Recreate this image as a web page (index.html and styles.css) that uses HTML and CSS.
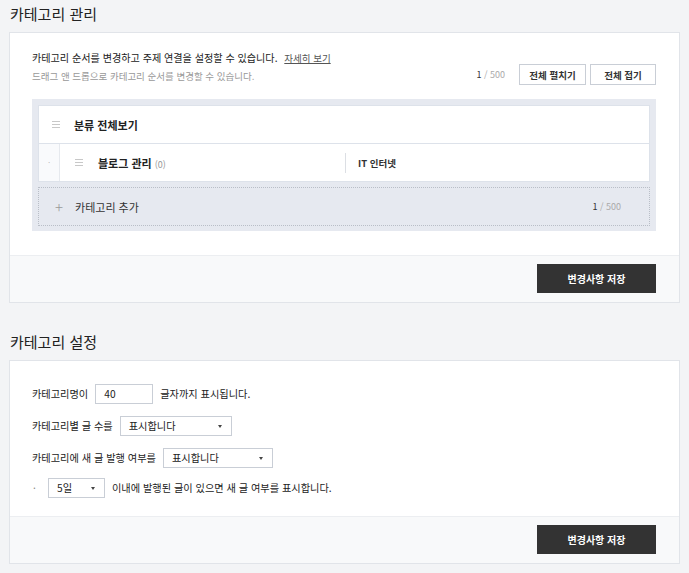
FILE: index.html
```html
<!DOCTYPE html>
<html lang="ko">
<head>
    <meta charset="UTF-8">
    <meta name="viewport" content="width=device-width, initial-scale=1.0">
    <title>카테고리 관리</title>
    <link rel="stylesheet" href="styles.css">
</head>
<body>

    <h2 class="section-title">카테고리 관리</h2>
    <div class="card">
        <div class="card-body">
            <div class="intro">
                <div class="intro-text">
                    <p class="desc">카테고리 순서를 변경하고 주제 연결을 설정할 수 있습니다. <a href="#" class="help-link">자세히 보기</a></p>
                    <p class="sub-desc">드래그 앤 드롭으로 카테고리 순서를 변경할 수 있습니다.</p>
                </div>
                <div class="intro-actions">
                    <span class="count"><b>1</b> / 500</span>
                    <button class="btn-line">전체 펼치기</button>
                    <button class="btn-line">전체 접기</button>
                </div>
            </div>

            <div class="tree">
                <div class="tree-row root">
                    <span class="drag"><i></i><i></i><i></i></span>
                    <span class="name">분류 전체보기</span>
                </div>
                <div class="tree-row child">
                    <span class="indent">·</span>
                    <div class="child-main">
                        <span class="drag"><i></i><i></i><i></i></span>
                        <span class="name">블로그 관리 <em>(0)</em></span>
                        <span class="topic">IT 인터넷</span>
                    </div>
                </div>
                <div class="tree-add">
                    <span class="plus">+</span>
                    <span class="name">카테고리 추가</span>
                    <span class="count"><b>1</b> / 500</span>
                </div>
            </div>
        </div>
        <div class="card-footer">
            <button class="btn-save">변경사항 저장</button>
        </div>
    </div>

    <h2 class="section-title">카테고리 설정</h2>
    <div class="card">
        <div class="card-body settings">
            <div class="set-row">
                <span>카테고리명이</span>
                <span class="field w-name">40</span>
                <span>글자까지 표시됩니다.</span>
            </div>
            <div class="set-row">
                <span>카테고리별 글 수를</span>
                <span class="field select w-show">표시합니다<i class="caret"></i></span>
            </div>
            <div class="set-row">
                <span>카테고리에 새 글 발행 여부를</span>
                <span class="field select w-new">표시합니다<i class="caret"></i></span>
            </div>
            <div class="set-row">
                <span class="bullet">·</span>
                <span class="field select w-day">5일<i class="caret"></i></span>
                <span>이내에 발행된 글이 있으면 새 글 여부를 표시합니다.</span>
            </div>
        </div>
        <div class="card-footer">
            <button class="btn-save">변경사항 저장</button>
        </div>
    </div>

</body>
</html>
```

FILE: styles.css
```css
body {
    margin: 0;
    padding: 0 9px 20px;
    background-color: #f3f4f6;
    font-family: "Noto Sans CJK KR", "Noto Sans", sans-serif;
    color: #333;
    font-size: 10px;
}

.section-title {
    margin: 0;
    height: 32px;
    line-height: 28px;
    padding-left: 1px;
    font-size: 15px;
    font-weight: 400;
    color: #222;
}

.card + .section-title {
    margin-top: 25px;
}

.card {
    background-color: #fff;
    border: 1px solid #e1e4e9;
}

.card-body {
    padding: 16px 23px 24px 22px;
}

/* intro */
.intro {
    display: flex;
    justify-content: space-between;
    align-items: flex-end;
}

.intro p {
    margin: 0;
    line-height: 18px;
}

.desc {
    color: #222;
    font-size: 10.1px;
}

.help-link {
    color: #555;
    margin-left: 4px;
    font-size: 9.5px;
}

.sub-desc {
    color: #999;
    font-size: 9.5px;
}

.intro-actions {
    display: flex;
    align-items: center;
    gap: 4px;
}

.count {
    color: #aaa;
    font-size: 9px;
    margin-right: 10px;
}

.count b {
    color: #333;
    font-weight: 400;
}

.btn-line {
    height: 21px;
    padding: 0;
    width: 67px;
    background: #fff;
    border: 1px solid #c9ced6;
    font-family: inherit;
    font-size: 9.5px;
    font-weight: 700;
    color: #333;
}

.intro-actions .btn-line:last-child {
    width: 66px;
}

/* tree */
.tree {
    margin-top: 14px;
    background-color: #e6e9f0;
    padding: 6px 6px 5px 6px;
}

.tree-row {
    display: flex;
    align-items: center;
    background-color: #fff;
    border: 1px solid #dde2ea;
}

.tree-row.root {
    height: 37px;
    padding-left: 13px;
}

.tree-row.child {
    height: 37px;
    border-top: none;
}

.drag {
    display: flex;
    flex-direction: column;
    gap: 2px;
    width: 8px;
    margin-right: 14px;
}

.drag i {
    display: block;
    height: 1px;
    background-color: #c8c8c8;
}

.name {
    font-size: 11px;
    font-weight: 700;
    color: #222;
}

.name em {
    font-style: normal;
    font-weight: 400;
    font-size: 9px;
    color: #999;
}

.indent {
    width: 20px;
    align-self: stretch;
    display: flex;
    align-items: center;
    justify-content: center;
    background-color: #f9fafc;
    border-right: 1px solid #e6e9ee;
    color: #bbb;
    font-size: 8px;
}

.child-main {
    flex: 1;
    display: flex;
    align-items: center;
    padding-left: 15px;
}

.child-main .drag {
    margin-right: 15px;
}

.child-main .name {
    width: 247px;
}

.topic {
    border-left: 1px solid #dcdfe4;
    padding-left: 12px;
    line-height: 20px;
    font-size: 9.5px;
    font-weight: 700;
    color: #333;
}

.tree-add {
    margin-top: 5px;
    height: 37px;
    display: flex;
    align-items: center;
    border: 1px dotted #b9bec7;
    padding-left: 16px;
}

.tree-add .plus {
    color: #999;
    font-size: 15px;
    font-weight: 300;
    margin-right: 12px;
}

.tree-add .name {
    font-weight: 400;
    color: #333;
}

.tree-add .count {
    margin-left: auto;
    margin-right: 28px;
}

/* footer */
.card-footer {
    display: flex;
    justify-content: flex-end;
    background-color: #f8f9fa;
    border-top: 1px solid #eceef1;
    padding: 8px 23px 9px;
}

.btn-save {
    width: 119px;
    height: 29px;
    background-color: #333;
    color: #fff;
    border: none;
    font-family: inherit;
    font-size: 10px;
    font-weight: 700;
}

/* settings */
.settings {
    padding: 23px 22px 18px;
    font-size: 10.2px;
}

.set-row {
    display: flex;
    align-items: center;
    gap: 7px;
    line-height: 20px;
    color: #222;
    margin-bottom: 12px;
}

.set-row:nth-child(3) {
    margin-bottom: 10px;
}

.set-row:last-child {
    margin-bottom: 0;
}

.field {
    display: flex;
    align-items: center;
    box-sizing: border-box;
    height: 20px;
    border: 1px solid #c9ced6;
    background-color: #fff;
    padding-left: 8px;
    color: #222;
}

.select {
    justify-content: space-between;
    padding-right: 9px;
}

.caret {
    width: 0;
    height: 0;
    border-left: 2.5px solid transparent;
    border-right: 2.5px solid transparent;
    border-top: 3px solid #444;
}

.w-name { width: 58px; }
.w-show { width: 112px; }
.w-new { width: 110px; }
.w-day { width: 57px; }

.bullet {
    color: #888;
    width: 8px;
    padding-left: 1px;
}
```
